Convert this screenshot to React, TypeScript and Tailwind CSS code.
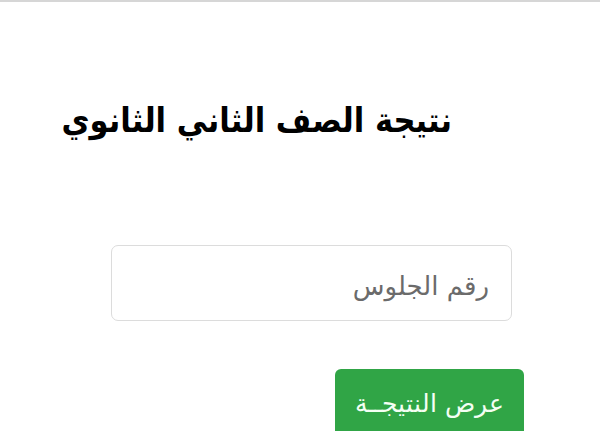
import React from "react";

export default function App() {
  return (
    <div
      dir="rtl"
      className="w-[600px] h-[431px] bg-white border-t-2 border-[#d6d6d6] overflow-hidden flex flex-col items-start"
      style={{ fontFamily: '"DejaVu Sans", sans-serif' }}
    >
      <h1
        className="shrink-0 whitespace-nowrap mt-[90px] mr-[148px] text-[34px] leading-[56px] font-bold text-black"
        style={{ fontFamily: '"DejaVu Sans Condensed", "DejaVu Sans", sans-serif' }}
      >
        نتيجة الصف الثاني الثانوي
      </h1>
      <div className="shrink-0 mt-[97px] mr-[88px] w-[401px] h-[76px] rounded-[7px] border border-[#dcdcdc] bg-white flex items-center pr-[22px] pt-[6px]">
        <span className="text-[26px] text-[#6b6b6b] leading-none">رقم الجلوس</span>
      </div>
      <button className="shrink-0 mt-[48px] mr-[76px] w-[189px] h-[80px] rounded-[6px] bg-[#30a546] text-[#f4fff4] flex items-start justify-center pt-[22px]">
        <span className="text-[25px] leading-none font-light">عرض النتيجــة</span>
      </button>
    </div>
  );
}
